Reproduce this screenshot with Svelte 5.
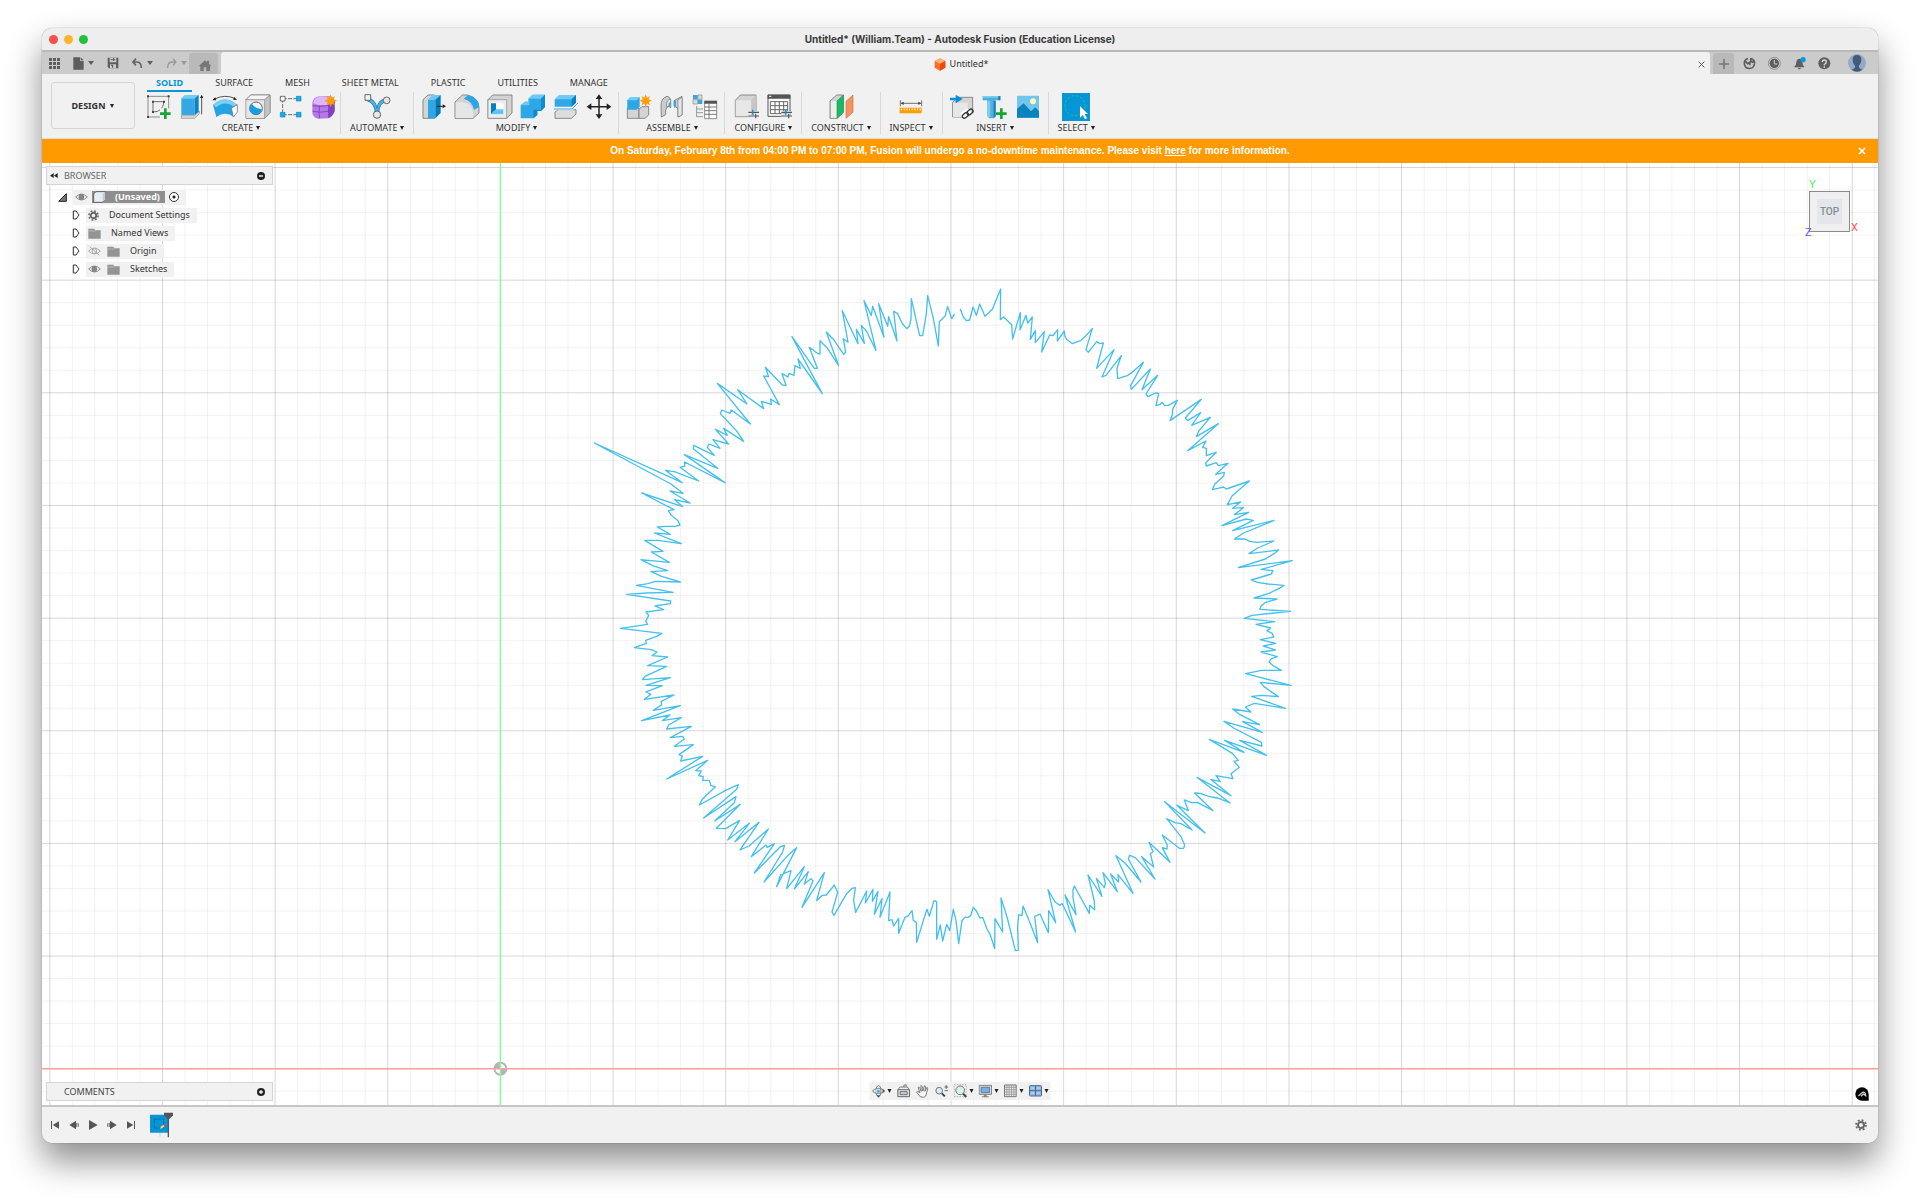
<script>
  let activeTab = 'SOLID';
  let showBanner = true;

  const tabs = ['SOLID', 'SURFACE', 'MESH', 'SHEET METAL', 'PLASTIC', 'UTILITIES', 'MANAGE'];

  const groups = [
    { label: 'CREATE', icons: ['sketch', 'extrude', 'revolve', 'hole', 'pattern', 'form'] },
    { label: 'AUTOMATE', icons: ['automate'] },
    { label: 'MODIFY', icons: ['presspull', 'fillet', 'shell', 'combine', 'split', 'move'] },
    { label: 'ASSEMBLE', icons: ['component', 'joint', 'bom'] },
    { label: 'CONFIGURE', icons: ['configure', 'configtable'] },
    { label: 'CONSTRUCT', icons: ['plane'] },
    { label: 'INSPECT', icons: ['measure'] },
    { label: 'INSERT', icons: ['derive', 'fastener', 'image'] },
    { label: 'SELECT', icons: ['select'] },
  ];

  // tool icons, drawn on an 84x84 board
  const grey = 'fill="#d4d4d4" stroke="#777" stroke-width="2.5" stroke-linejoin="round"';
  const sliders = '<path d="M46 58h32M46 69h32" stroke="#eee" stroke-width="8"/><path d="M46 58h32M46 69h32M68 62v14" stroke="#555" stroke-width="3.5"/><path d="M59 50v15" stroke="#0a96dc" stroke-width="5"/>';
  const plus = '<path d="M61 46v32M45 62h32" stroke="#16a63c" stroke-width="8"/>';
  const star = '<path d="M62 4l4 10 9-5-4 10 10 4-10 4 4 10-9-5-4 10-4-10-9 5 4-10-10-4 10-4-4-10 9 5z" fill="#ff9c08"/>';

  const icons = {
    sketch: `<path d="M9 10h62v62H9z" fill="none" stroke="#777" stroke-width="2.5"/><g fill="#444"><path d="M6 7h6v6H6zM68 7h6v6h-6zM6 69h6v6H6z"/></g><path d="M24 26h33M24 26v31M24 57q30 0 33-31" fill="none" stroke="#555" stroke-width="2.5"/><g fill="#444"><path d="M21 23h6v6h-6zM54 23h6v6h-6zM21 54h6v6h-6z"/></g><path d="M45 46h36v30H45z" fill="#f1f1f1"/>${plus}`,
    extrude: '<path d="M10 68h40l14-14v8L50 76H10z" fill="#ddd" stroke="#888" stroke-width="2"/><path d="M10 16h40v50H10z" fill="#35a7e4"/><path d="M10 16L20 6h42L50 16z" fill="#73ccf6"/><path d="M50 16L62 6v50L50 66z" fill="#0b83c5"/><path d="M71 64V12" stroke="#333" stroke-width="2.5"/><path d="M71 5l5 10H66z" fill="#222"/>',
    revolve: '<path d="M6 35Q42 4 78 35L69 72Q42 53 16 72z" fill="#25a3e2"/><path d="M6 35Q42 4 78 35L72 43Q42 20 15 43z" fill="#7bcff5"/><path d="M61 45l18-10v22L67 72z" fill="#fff" stroke="#777" stroke-width="2.5"/><path d="M9 19Q42 2 73 17" fill="none" stroke="#333" stroke-width="2.5"/><path d="M4 22l9-9 3 9zM78 20l-9-8-2 9z" fill="#222"/>',
    hole: `<path d="M6 20L20 6h58v53L62 76H6z" ${grey}/><path d="M7 21h55v54H7z" fill="#e6e6e6"/><path d="M6 20L20 6h58L62 20z" fill="#f6f6f6" stroke="#777" stroke-width="2"/><path d="M62 20L78 6v53L62 76z" fill="#c4c4c4" stroke="#888" stroke-width="2"/><circle cx="36" cy="46" r="19" fill="#eef5fa" stroke="#666" stroke-width="3"/><path d="M24 33Q37 50 53 48A18 18 0 1 1 24 33z" fill="#169de2"/>`,
    pattern: '<path d="M17 17h50M17 17v50M17 65h50" stroke="#555" stroke-width="2.5" stroke-dasharray="12 4"/><path d="M10 10h14v14H10z" fill="#fff" stroke="#555" stroke-width="2.5"/><g fill="#25a6e8" stroke="#0b8bcb" stroke-width="2"><path d="M58 10h14v14H58zM10 58h14v14H10zM58 58h14v14H58z"/></g>',
    form: `<path d="M7 32Q8 12 28 10l27-1Q72 12 74 28v28q-6 14-19 20l-30 1Q9 74 7 60z" fill="#b479e6"/><path d="M8 30Q16 12 30 10l26 1 16 14-17 11H24z" fill="#dbb7f8"/><path d="M54 36l20-11v28q-6 18-20 22z" fill="#8246bd"/><path d="M8 38q20 4 46 0l20-12M8 55q22 5 46 0l20-10M29 38q-4 18 0 38M64 30v38" fill="none" stroke="#7d3db8" stroke-width="2.5"/>${star}`,
    automate: '<path d="M16 15q22 5 26 31 4-30 29-27l-1 8Q48 28 47 62H37Q36 30 12 23z" fill="#49b6eb" stroke="#20719c" stroke-width="2.5"/><path d="M6 5h17v17H6z" fill="#f4f4f4" stroke="#666" stroke-width="3"/><circle cx="71" cy="22" r="10" fill="#e8e8e8" stroke="#666" stroke-width="3"/><circle cx="42" cy="65" r="11" fill="#e8e8e8" stroke="#666" stroke-width="3"/>',
    presspull: `<path d="M9 20L24 6h20v70H9z" ${grey}/><path d="M24 20L38 6h24L48 20z" fill="#6bc9f5"/><path d="M24 20h22v56H24z" fill="#30a7e5"/><path d="M46 20L62 6v54L46 76z" fill="#057bbb"/><path d="M50 40h22" stroke="#222" stroke-width="3"/><path d="M68 34l10 6-10 6z" fill="#222"/>`,
    fillet: `<path d="M6 27L28 6h16q34 10 34 38v16L60 76H6z" ${grey}/><path d="M8 28h18q31 4 34 29v18H8z" fill="#e6e6e6"/><path d="M32 17L46 6q32 9 32 37L63 50Q57 24 32 17z" fill="#29a7e7"/>`,
    shell: `<path d="M6 20L20 6h58v54L62 76H6z" ${grey}/><path d="M6 20h56v56H6z" fill="#ececec" stroke="#888" stroke-width="2"/><path d="M15 31h37v34H15z" fill="#fff"/><path d="M15 31h15v18L15 64z" fill="#087fc0"/><path d="M15 64l15-15h22v15z" fill="#5fc3f3"/>`,
    combine: '<path d="M5 37l13-11h10V17L41 5h37v37L66 54H55v12L43 76H5z" fill="#2ea7e6"/><path d="M5 37l13-11h10V17L41 5h37L66 17H31v20z" fill="#6bcaf5"/><path d="M66 17L78 5v37L66 54H55v12L43 76V50h23z" fill="#118bcf"/>',
    split: '<path d="M8 20L22 6h50v23L59 41H8z" fill="#31a7e5"/><path d="M8 19L22 6h50L59 19z" fill="#6dcbf6"/><path d="M59 19L72 6v23L59 41z" fill="#087fc0"/><path d="M9 57l10-7h53v13L59 76H9z" fill="#ddd" stroke="#777" stroke-width="2.5"/><path d="M6 48h54l18-18" fill="none" stroke="#f8f8f8" stroke-width="7"/><path d="M6 48h54l18-18" fill="none" stroke="#2ea5e4" stroke-width="3"/>',
    move: '<path d="M42 11v60M12 41h60" stroke="#222" stroke-width="4.5"/><g fill="#222"><path d="M42 4l10 14H32zM42 78l10-14H32zM5 41l14-10v20zM79 41L65 31v20z"/></g>',
    component: `<path d="M7 45h35v31H7z" ${grey}/><path d="M42 49l9-8h20v25L60 76H42z" ${grey}/><path d="M7 22l9-9h28v27l-9 10H7z" fill="#2ba6e6"/><path d="M7 22l9-9h28l-9 9z" fill="#73cef8"/>${star}`,
    joint: '<g fill="#ccc" stroke="#777" stroke-width="2.5"><path d="M9 40q-1-24 18-30 11 0 11 18v15q-9-8-15 8v14L10 72z"/><path d="M48 23L72 10v56l-12 6V46l-12-7z"/></g><path d="M25 43q0-24 13-25v25q-9-6-13 0M60 20l12-7v53l-12 6z" fill="#e7e7e7" stroke="#777" stroke-width="2"/><path d="M31 41q0-14 6-13v17q-2-5-6-4M48 24l6-3v19l-6 5z" fill="#37a9e2"/>',
    bom: '<path d="M6 6h14v13H6zM21 20h13v13H21z" fill="#38a7e5"/><path d="M21 6h12v13H21zM6 20h14v13H6z" fill="#ddd" stroke="#888" stroke-width="2"/><path d="M17 39v33M17 48h19M17 59h19M17 71h19" stroke="#999" stroke-width="3"/><path d="M41 25h36v52H41z" fill="#fff" stroke="#777" stroke-width="2.5"/><path d="M40 23h38v9H40z" fill="#555"/><path d="M41 42h36M41 53h36M41 64h36M54 32v44" stroke="#777" stroke-width="3"/>',
    configure: `<path d="M7 22L22 6h47v50L55 71H7z" ${grey}/><path d="M8 22h47v48H8z" fill="#e7e7e7"/><path d="M55 22L69 6v50L55 71z" fill="#c6c6c6"/>${sliders}`,
    configtable: `<path d="M6 6h66v64H6z" fill="#fff" stroke="#555" stroke-width="3"/><path d="M5 5h68v12H5z" fill="#555"/><path d="M9 10h7" stroke="#fff" stroke-width="3"/><path d="M13 26h52v36H13zM13 38h52M13 50h52M27 26v36M40 26v36M53 26v36" fill="none" stroke="#666" stroke-width="3"/>${sliders}`,
    plane: `<path d="M9 24L29 6h20v52L31 76H9z" ${grey}/><path d="M12 25h18v49H12z" fill="#eee"/><path d="M30 24L49 6v52L30 76z" fill="#16bd67" stroke="#2d925b" stroke-width="2"/><path d="M57 25L78 6v52L57 76z" fill="#f3935f" stroke="#d27345" stroke-width="2"/>`,
    measure: '<path d="M10 22v18M74 22v18M13 31h58" stroke="#555" stroke-width="2.5"/><path d="M11 31l9-5v10zM73 31l-9-5v10z" fill="#444"/><path d="M8 44h66v17H8z" fill="#ff9c08"/><path d="M12 49h60" stroke="#fff" stroke-width="5" stroke-dasharray="3 5"/>',
    derive: `<path d="M14 28L28 13h46v45L60 72H14z" ${grey}/><path d="M15 29h44v43H15z" fill="#e7e7e7"/><path d="M6 14h17V5l21 13-21 13v-9H6z" fill="#078fd9"/><g fill="none" stroke="#fff" stroke-width="10"><rect x="43" y="56" width="22" height="13" rx="6" transform="rotate(-38 54 63)"/></g><g fill="none" stroke="#333" stroke-width="4"><rect x="42" y="61" width="20" height="12" rx="6" transform="rotate(-40 52 67)"/><rect x="56" y="51" width="20" height="12" rx="6" transform="rotate(-40 66 57)"/></g>`,
    fastener: `<path d="M5 9h53v13H44v48l-6 6H25l-6-6V22H5z" fill="#4bafe2"/><path d="M5 9h53v5H5zM20 24h8v48h-8z" fill="#81cbed"/><path d="M52 9h6v13h-6zM38 24h6v46l-6 6z" fill="#207eae"/>${plus}`,
    image: '<path d="M9 8h66v66H9z" fill="#72c6ee"/><path d="M9 47l20-16 22 24 13-12 11 12v19H9z" fill="#0a82bd"/><circle cx="57" cy="25" r="9" fill="#fff5bd"/>',
    select: '<path d="M0 0h84v84H0z" fill="#0696d7"/><circle cx="39" cy="38" r="30" fill="none" stroke="#23bd91" stroke-width="3" stroke-dasharray="8 5"/><path d="M54 40v34l8-8 7 13 6-3-7-13h10z" fill="#fff"/>',
  };

  const tree = [
    { name: 'Document Settings', icon: 'gear', eye: '' },
    { name: 'Named Views', icon: 'folder', eye: '' },
    { name: 'Origin', icon: 'folder', eye: 'off' },
    { name: 'Sketches', icon: 'folder', eye: 'on' },
  ];

  // view controls, 42x42 board
  const navTools = [
    { name: 'Orbit', menu: true, art: '<ellipse cx="21" cy="21" rx="17" ry="7" fill="none" stroke="#777" stroke-width="3"/><ellipse cx="21" cy="21" rx="7" ry="16" fill="none" stroke="#777" stroke-width="3"/><path d="M33 15l8 6-8 6zM15 34l6 7 6-7z" fill="#555"/><path d="M14 15h12v12H14z" fill="#f1f1f1"/><path d="M16 17h9v9h-9z" fill="#47b2ef"/>' },
    { name: 'Look At', menu: false, art: '<path d="M4 17h35v21H4z" fill="#e4e4e4" stroke="#666" stroke-width="3"/><path d="M11 23h21v9H11z" fill="#c4d4e6" stroke="#555" stroke-width="2.5"/><path d="M5 16l6-7h22l5 7M22 9V4l7-2v5" fill="none" stroke="#777" stroke-width="3"/>' },
    { name: 'Pan', menu: false, art: '<path d="M14 38L3 24q2-5 10 2L8 10q4-4 9 12l-1-17q5-2 6 16l5-16q5 0 1 17l7-12q4 2-1 14-2 16-9 16z" fill="#f5f5f5" stroke="#666" stroke-width="2.5"/>' },
    { name: 'Zoom', menu: false, art: '<circle cx="14" cy="20" r="10" fill="#d6ecf7" stroke="#777" stroke-width="3"/><path d="M22 28l9 9" stroke="#444" stroke-width="6"/><path d="M30 9h11M35 3v12M30 20h11" stroke="#555" stroke-width="2.5"/>' },
    { name: 'Fit', menu: true, art: '<path d="M2 2h36v36H2z" fill="none" stroke="#999" stroke-width="2.5" stroke-dasharray="4 4"/><circle cx="20" cy="19" r="13" fill="#d9f0ee" stroke="#777" stroke-width="3"/><path d="M29 29l9 10" stroke="#444" stroke-width="6"/>' },
    { name: 'Display Settings', menu: true, art: '<rect x="2" y="4" width="37" height="27" fill="#d5d5d5" stroke="#777" stroke-width="2.5"/><path d="M8 10h25v16H8z" fill="#77aee5" stroke="#41658b" stroke-width="2"/><path d="M16 31h9v6h6v3H10v-3h6z" fill="#888"/>' },
    { name: 'Grid and Snaps', menu: true, art: '<path d="M3 3h35v35H3z" fill="#eee" stroke="#777" stroke-width="3"/><path d="M10 3v35M17 3v35M24 3v35M31 3v35M3 10h35M3 17h35M3 24h35M3 31h35" stroke="#888" stroke-width="2"/>' },
    { name: 'Viewports', menu: true, art: '<rect x="3" y="5" width="36" height="31" rx="2" fill="#92b8df" stroke="#496b91" stroke-width="3"/><path d="M21 5v31M3 20h36" stroke="#496b91" stroke-width="3"/><path d="M8 12h9M25 12h9M8 27h9M25 27h9" stroke="#b9d3ec" stroke-width="4"/>' },
  ];

  const playback = [
    { name: 'Go to start', d: 'M3 3h3v24H3zM27 4v22L8 15z' },
    { name: 'Step back', d: 'M1 15L21 2v26zM22 9h3v12h-3zM27 10h2v10h-2z' },
    { name: 'Play', d: 'M3 0v30l26-15z' },
    { name: 'Step forward', d: 'M29 15L9 2v26zM5 9h3v12H5zM1 10h2v10H1z' },
    { name: 'Go to end', d: 'M24 3h3v24h-3zM3 4v22l19-11z' },
  ];

  const gridStep = 22.53;
  const originX = 458.4;
  const originY = 905.7;
  const columns = Array.from({ length: 140 }, (_, i) => i - 20);
  const rows = Array.from({ length: 90 }, (_, i) => i - 10);

  // sketch profile, one run per quadrant
  const profile = [
    { x: 0, y: 0, points: '1093,103 1085,116 1073,79 1066,107 1048,125 1045,198 1030,115 1013,47 1009,102 998,167 989,167 964,56 963,117 958,139 950,146 938,132 922,100 911,94 921,183 896,110 893,139 866,71 882,172 848,79 844,106 822,62 858,211 829,153 814,136 823,190 799,148 804,191 757,92 774,187 760,176 767,217 761,223 731,179 709,156 746,257 711,203 690,182 690,222 682,220 658,202 682,265 673,265 606,170 697,341 624,237 631,265 615,257 612,286 597,280 594,291 576,281 588,316 577,315 526,262 536,290 521,288 568,374 542,357 544,373 514,364 521,386 443,329 471,372 382,310 481,432 424,390 420,400 396,390 391,401 440,453 461,484 401,445 412,466 376,448 416,492 369,479 390,505 357,492 352,502 373,526 311,496 310,506 383,565 283,524 405,608 284,546 284,558 270,562 326,603 253,575 226,571 277,608 13,489 243,612 279,640 240,633 300,669 254,659 278,680 155,639 252,689 235,692 244,706 264,722 270,735 255,739 226,739 202,741 241,763 193,759 274,791 204,781 164,781 219,814 184,816 238,847 153,839 188,857 233,872 183,875 215,889 271,906 196,904 174,911 139,916 249,937 169,939 110,943 242,963 241,971 195,978 221,989 168,996 176,1006 167,1024 173,1033 92,1045' },
    { x: 0, y: 960, points: '92,85 215,100 200,109 167,121 169,130 133,143 184,149 201,156 186,167 233,171 173,197 230,199 165,229 158,239 241,233 168,256 217,257 168,276 183,283 163,298 252,285 214,304 214,315 190,331 271,317 155,362 240,345 217,362 274,353 236,375 230,387 304,379 241,413 278,409 283,417 253,439 310,434 267,464 277,468 272,483 338,469 230,537 353,481 317,512 334,513 326,527 340,530 338,541 358,541 363,557 376,560 337,598 328,615 407,571 445,554 440,568 341,654 438,590 433,608 374,663 451,613 379,685 407,686 449,661 413,720 478,670 435,725 507,667 450,750 477,738 535,687 484,770 528,735 532,742 553,731 493,819 571,740 584,736 577,758 522,846 594,766 620,743 560,860 572,824 603,812 590,866 643,800 613,867 655,815 643,852 663,836 669,843 636,922 703,818 680,902 697,886 709,885 733,855 743,877 726,936 732,946 770,881 786,865 796,863 791,901 797,937 830,873 826,909 849,868 847,904 864,874 853,943 876,896 870,952 900,876 896,962 906,959 911,978 926,955 926,1000 945,952 955,947 966,932 970,961 979,967 980,1027 998,968 1011,928 1018,949 1032,902 1040,905 1040,1018 1051,975 1058,1023 1070,973 1079,992 1090,928 1098,961 1106,1031 1116,962' },
    { x: 1050, y: 960, points: '66,962 75,952 84,952 92,947 100,922 109,933 120,954 128,952 141,987 151,1005 164,1046 165,956 188,996 183,894 202,954 226,1052 235,1051 233,980 236,944 246,947 249,918 269,966 293,1028 284,949 300,942 325,998 326,932 347,968 324,869 345,906 359,916 367,911 407,996 375,885 408,944 399,892 399,870 403,858 448,940 449,916 464,929 463,903 444,825 486,889 469,835 493,863 496,850 489,818 532,875 512,822 536,846 534,824 579,880 528,767 555,789 603,846 565,777 569,766 586,773 645,837 605,770 641,801 631,761 639,755 627,727 690,787 667,743 681,747 682,736 667,705 718,745 731,745 734,735 723,710 680,656 705,668 723,671 756,690 674,605 795,699 711,616 745,632 733,600 755,608 772,607 819,632 764,579 781,580 806,589 832,594 870,609 771,532 873,587 812,538 841,545 828,527 879,536 873,521 898,502 882,484 895,481 877,460 808,418 912,457 854,421 980,466 899,421 966,438 964,427 881,384 852,364 967,397 908,365 959,374 900,344 878,327 933,336 916,321 943,310 1036,325 935,289 965,286 1015,290 972,260 961,247 1053,256 917,221 965,211 1024,211 998,196 987,186 993,177 1012,170 963,156 1006,150 970,138 1007,130 961,119 1001,111 997,101 981,92 992,84 948,73 1004,65 913,55 936,46 1052,34 960,28' },
    { x: 1050, y: 0, points: '960,988 963,978 975,968 1011,957 942,954 987,940 1018,925 1032,916 984,912 952,907 934,900 994,882 999,872 964,868 1057,842 895,863 976,837 1002,821 1016,810 927,821 953,804 1002,783 950,787 929,784 916,777 883,777 911,759 1002,721 878,752 940,721 919,717 846,737 926,697 883,704 910,683 878,685 902,666 862,674 876,648 928,603 859,627 851,621 817,629 824,613 851,588 853,577 827,583 864,550 835,557 829,548 799,558 797,549 829,517 799,527 799,505 788,502 798,483 743,512 835,431 769,470 777,452 811,412 755,436 782,398 743,422 736,414 784,358 690,422 697,405 698,388 712,361 685,376 674,377 667,367 661,373 648,377 656,340 646,339 624,350 618,342 653,286 606,329 631,267 574,328 572,317 610,247 577,277 562,287 533,296 531,265 544,227 498,286 486,291 522,209 470,265 490,189 479,191 470,185 445,217 438,209 457,145 436,169 423,181 397,191 380,178 375,170 373,153 352,183 353,149 339,167 329,165 305,216 313,155 286,188 286,152 271,178 277,111 263,129 258,106 240,150 241,97 218,177 215,134 191,111 181,119 182,27 157,88 135,109 119,72 109,106 99,81 89,120 79,122 70,111 61,88' },
  ];

  function closeBanner() {
    showBanner = false;
  }
</script>

{#snippet gear(size)}
  <svg width={size} height={size} viewBox="0 0 36 36">
    <circle cx="18" cy="18" r="9" fill="none" stroke="#666" stroke-width="6" />
    <circle cx="18" cy="18" r="15" fill="none" stroke="#666" stroke-width="5" stroke-dasharray="5.8 5.98" />
  </svg>
{/snippet}

{#snippet eye(off)}
  <svg width="13" height="10" viewBox="0 0 39 30">
    <path d="M2 15Q19-3 37 15 19 33 2 15z" fill={off ? 'none' : '#eee'} stroke={off ? '#aaa' : '#8a8a8a'} stroke-width="3" />
    <circle cx="19" cy="15" r="7" fill={off ? 'none' : '#8a8a8a'} stroke={off ? '#aaa' : '#777'} stroke-width="3" />
    {#if off}<path d="M5 2l29 26" stroke="#aaa" stroke-width="3" />{/if}
  </svg>
{/snippet}

<div class="window">
  <header class="titlebar">
    <div class="lights">
      <button class="light red" aria-label="Close window"></button>
      <button class="light yellow" aria-label="Minimize window"></button>
      <button class="light green" aria-label="Zoom window"></button>
    </div>
    <h1>Untitled* (William.Team) - Autodesk Fusion (Education License)</h1>
  </header>

  <div class="tabbar">
    <div class="quick">
      <button aria-label="Data panel">
        <svg width="11" height="11" viewBox="0 0 33 33" fill="#5e5e5e"><path d="M0 0h9v9H0zM12 0h9v9h-9zM24 0h9v9h-9zM0 12h9v9H0zM12 12h9v9h-9zM24 12h9v9h-9zM0 24h9v9H0zM12 24h9v9h-9zM24 24h9v9h-9z" /></svg>
      </button>
      <button aria-label="File">
        <svg width="11" height="13" viewBox="0 0 33 39" fill="#5e5e5e"><path d="M1 1h20v11h11v26H1zM23 1l9 9h-9z" /></svg>
        <i class="caret"></i>
      </button>
      <button aria-label="Save">
        <svg width="12" height="12" viewBox="0 0 36 36"><path d="M2 2h32v32H6l-4-4z" fill="#5e5e5e" /><path d="M8 3h20v13H8zM9 22h18v12H9z" fill="#cbcbcb" /><path d="M11 8h14M20 3v9M13 24h4v8" stroke="#5e5e5e" stroke-width="3" /></svg>
      </button>
      <button aria-label="Undo">
        <svg width="11" height="11" viewBox="0 0 33 33"><path d="M12 2L3 12l9 10M4 12h12q12 1 12 18" fill="none" stroke="#666" stroke-width="5" /></svg>
        <i class="caret"></i>
      </button>
      <button aria-label="Redo">
        <svg width="11" height="11" viewBox="0 0 33 33"><path d="M21 2l9 10-9 10M29 12H17Q5 13 5 30" fill="none" stroke="#999" stroke-width="4" /></svg>
        <i class="caret pale"></i>
      </button>
    </div>
    <button class="home" aria-label="Home">
      <svg width="12" height="11" viewBox="0 0 36 33" fill="#777"><path d="M0 17L18 1l6 5V2h6v9l6 6-3 3v13H22V22h-8v11H4V20z" /></svg>
    </button>
    <div class="doc">
      <div class="docname">
        <svg width="12" height="13" viewBox="0 0 36 39"><path d="M18 1l16 8v20L18 38 2 29V9z" fill="#f9702a" /><path d="M18 1l16 8-16 8L2 9z" fill="#ffb37a" /><path d="M18 17l16-8v20l-16 9z" fill="#ea4b0b" /></svg>
        Untitled*
      </div>
      <button class="close" aria-label="Close document">
        <svg width="7" height="7" viewBox="0 0 21 21"><path d="M2 2l17 17M19 2L2 19" stroke="#555" stroke-width="3" /></svg>
      </button>
    </div>
    <button class="add" aria-label="New document">
      <svg width="10" height="10" viewBox="0 0 30 30"><path d="M15 0v30M0 15h30" stroke="#777" stroke-width="5" /></svg>
    </button>
    <div class="account">
      <button aria-label="Extensions">
        <svg width="13" height="13" viewBox="0 0 39 39"><path d="M15 5A15 15 0 1 0 34 21M21 5q14 1 14 15M7 13l7 7 7-5-1 10M23 6l1 8 9 2" fill="none" stroke="#5e5e5e" stroke-width="5" /></svg>
      </button>
      <button aria-label="Job status">
        <svg width="13" height="13" viewBox="0 0 39 39"><circle cx="19" cy="19" r="18" fill="none" stroke="#777" stroke-width="2" /><circle cx="19" cy="19" r="14" fill="#5e5e5e" /><path d="M19 9v12h9" fill="none" stroke="#ccc" stroke-width="3" /></svg>
      </button>
      <button aria-label="Notifications">
        <svg width="13" height="13" viewBox="0 0 39 39"><path d="M4 29q6-4 6-14 1-9 9-10 9 1 9 10 0 10 6 14v2H4zM14 33h10q-5 8-10 0" fill="#5e5e5e" /><circle cx="30" cy="8" r="8" fill="#0696e7" /></svg>
      </button>
      <button aria-label="Help">
        <svg width="13" height="13" viewBox="0 0 39 39"><circle cx="19" cy="19" r="18" fill="#5e5e5e" /><path d="M13 15q0-6 6-6t6 6q0 4-6 7v3M19 28v4" fill="none" stroke="#ddd" stroke-width="4" /></svg>
      </button>
      <button class="avatar" aria-label="Profile">
        <svg width="18" height="18" viewBox="0 0 54 54"><circle cx="27" cy="27" r="27" fill="#91abc8" /><path d="M27 3q14 0 13 16-1 11-7 16v6l10 7q-15 11-32 0l10-7v-6q-7-5-7-16Q13 3 27 3z" fill="#455a76" /></svg>
      </button>
    </div>
  </div>

  <div class="ribbon">
    <button class="workspace">DESIGN <i class="caret dark"></i></button>
    <div class="tools">
      <nav>
        {#each tabs as tab}
          <button class="tab" class:active={activeTab === tab} on:click={() => (activeTab = tab)}>{tab}</button>
        {/each}
      </nav>
      <div class="groups">
        {#each groups as group}
          <div class="group">
            <div class="icons">
              {#each group.icons as name}
                <button class="tool" aria-label={name}>
                  <svg width="28" height="28" viewBox="0 0 84 84">{@html icons[name]}</svg>
                </button>
              {/each}
            </div>
            <button class="grouplabel">{group.label} <i class="caret dark"></i></button>
          </div>
        {/each}
      </div>
    </div>
  </div>

  {#if showBanner}
    <div class="banner">
      <p>On Saturday, February 8th from 04:00 PM to 07:00 PM, Fusion will undergo a no-downtime maintenance. Please visit <a href="#status">here</a> for more information.</p>
      <button aria-label="Dismiss" on:click={closeBanner}>
        <svg width="8" height="8" viewBox="0 0 24 24"><path d="M3 3l18 18M21 3L3 21" stroke="#fff" stroke-width="5" /></svg>
      </button>
    </div>
  {/if}

  <main class="canvas">
    <svg class="drawing" width="100%" height="100%">
      <g stroke="#000">
        {#each columns as i}
          {#if i !== 0}
            <line x1={originX + i * gridStep} x2={originX + i * gridStep} y1="0" y2="100%" stroke-opacity={i % 5 ? 0.05 : 0.16} />
          {/if}
        {/each}
        {#each rows as i}
          {#if i !== 0}
            <line x1="0" x2="100%" y1={originY - i * gridStep} y2={originY - i * gridStep} stroke-opacity={i % 5 ? 0.05 : 0.16} />
          {/if}
        {/each}
      </g>
      <circle cx={originX} cy={originY} r="6" fill="#fff" stroke="#b5b5b5" stroke-width="2" />
      <path d="M458 906v-6a6 6 0 0 0-6 6zM458 906v6a6 6 0 0 0 6-6z" fill="#b5b5b5" />
      <line x1="0" x2="100%" y1={originY} y2={originY} stroke="#ff9c9c" stroke-width="1.4" />
      <line x1={originX} x2={originX} y1="0" y2="100%" stroke="#8df59a" stroke-width="1.4" />
      <g transform="translate(548 117) scale(0.33333)" fill="none" stroke="#45c0ed" stroke-width="4" stroke-linejoin="round" stroke-linecap="round">
        {#each profile as run}
          <polyline points={run.points} transform="translate({run.x} {run.y})" />
        {/each}
      </g>
    </svg>

    <section class="browser">
      <div class="panelhead">
        <svg width="8" height="5" viewBox="0 0 24 15"><path d="M11 0v15L0 8zM23 0v15L12 8z" fill="#222" /></svg>
        <h2>BROWSER</h2>
        <button aria-label="Collapse browser">
          <svg width="8" height="8" viewBox="0 0 24 24"><circle cx="12" cy="12" r="12" fill="#222" /><path d="M6 12h12" stroke="#f1f1f1" stroke-width="4" /></svg>
        </button>
      </div>
      <ul>
        <li class="root">
          <svg width="9" height="9" viewBox="0 0 27 27"><path d="M25 2v23H2z" fill="#777" stroke="#222" stroke-width="3" /></svg>
          <div class="rootchip">
            {@render eye(false)}
            <span class="unsaved">
              <svg width="13" height="12" viewBox="0 0 39 36"><path d="M2 9l7-7h28v23l-8 9H2z" fill="#e9eef5" stroke="#555" stroke-width="2.5" /><path d="M29 9l8-7v23l-8 9z" fill="#c3ccd8" /></svg>
              (Unsaved)
            </span>
            <input type="radio" checked aria-label="Active component" />
          </div>
        </li>
        {#each tree as node}
          <li>
            <svg width="8" height="10" viewBox="0 0 24 30"><path d="M4 3l8 0 9 12-9 12H4z" fill="#fff" stroke="#333" stroke-width="3" /></svg>
            <div class="chip">
              {#if node.eye}
                {@render eye(node.eye === 'off')}
              {/if}
              {#if node.icon === 'gear'}
                {@render gear(11)}
              {:else}
                <svg width="13" height="11" viewBox="0 0 39 33"><path d="M1 2h18l3 5h16v25H1z" fill="#949494" /><path d="M1 9h22" stroke="#ccc" stroke-width="2" /></svg>
              {/if}
              <span>{node.name}</span>
            </div>
          </li>
        {/each}
      </ul>
    </section>

    <div class="viewcube">
      <span class="axis y">Y</span>
      <button class="face"><span>TOP</span></button>
      <span class="axis z">Z</span>
      <span class="axis x">X</span>
    </div>

    <section class="comments">
      <div class="panelhead">
        <h2>COMMENTS</h2>
        <button aria-label="Add comment">
          <svg width="8" height="8" viewBox="0 0 24 24"><circle cx="12" cy="12" r="12" fill="#222" /><path d="M6 12h12M12 6v12" stroke="#f1f1f1" stroke-width="4" /></svg>
        </button>
      </div>
    </section>

    <div class="navbar">
      {#each navTools as tool}
        <button aria-label={tool.name}>
          <svg width="14" height="14" viewBox="0 0 42 42">{@html tool.art}</svg>
          {#if tool.menu}<i class="caret dark"></i>{/if}
        </button>
      {/each}
    </div>

    <button class="assistant" aria-label="Assistant">
      <svg width="14" height="14" viewBox="0 0 42 42"><path d="M21 1a20 20 0 1 0 0 40h20V21A20 20 0 0 0 21 1z" fill="#000" /><path d="M10 27l13-11q9-2 9 10l-7-5-7 7" fill="none" stroke="#ccc" stroke-width="4" /></svg>
    </button>
  </main>

  <footer class="timeline">
    <div class="playback">
      {#each playback as item}
        <button aria-label={item.name}>
          <svg width="10" height="10" viewBox="0 0 30 30"><path d={item.d} fill="#555" /></svg>
        </button>
      {/each}
    </div>
    <button class="feature" aria-label="Sketch feature">
      <svg width="24" height="26" viewBox="0 0 72 78">
        <path d="M30 60v14" stroke="#bbb" stroke-width="2" />
        <path d="M0 8h56v54H0z" fill="#0696d7" />
        <path d="M13 21h28v27H13z" fill="none" stroke="#17699d" stroke-width="3" stroke-dasharray="20 4" />
        <path d="M30 50l3-7 7-4 4 4-7 6z" fill="#f8cf4c" />
        <path d="M41 38l4-3 3 4-3 4z" fill="#e34b4b" />
        <path d="M42 2h27v8L59 20h-7L42 10z" fill="#555" />
        <path d="M55 16v60" stroke="#555" stroke-width="4" />
      </svg>
    </button>
    <button class="settings" aria-label="Timeline settings">{@render gear(12)}</button>
  </footer>
</div>

<style>
  :global(body) {
    margin: 0;
    background: #fff;
  }

  :global(#app) {
    display: flow-root;
    height: 100vh;
    overflow: hidden;
  }

  .window {
    box-sizing: border-box;
    display: flex;
    flex-direction: column;
    height: calc(100vh - 84px);
    min-height: 480px;
    margin: 28px 42px 0;
    border-radius: 10px;
    overflow: hidden;
    background: #f1f1f1;
    box-shadow: 0 0 1px rgba(0, 0, 0, 0.6), 0 18px 34px rgba(0, 0, 0, 0.45);
    font-family: 'Noto Sans', 'Open Sans', sans-serif;
    font-size: 9px;
    line-height: 12px;
    color: #333;
  }

  button {
    margin: 0;
    padding: 0;
    border: 0;
    background: none;
    font: inherit;
    color: inherit;
    display: flex;
    align-items: center;
    justify-content: center;
  }

  svg {
    display: block;
    flex: none;
  }

  h1,
  h2,
  p,
  ul {
    margin: 0;
    padding: 0;
    font-size: inherit;
    list-style: none;
  }

  .caret {
    width: 0;
    height: 0;
    border: solid transparent;
    border-width: 4px 3px 0;
    border-top-color: #5e5e5e;
  }

  .caret.dark {
    border-width: 4px 2px 0;
    border-top-color: #222;
  }

  .caret.pale {
    border-top-color: #999;
  }

  /* title bar */
  .titlebar {
    display: grid;
    grid-template-columns: 60px 1fr 60px;
    align-items: center;
    height: 22px;
    flex: none;
    background: #eee;
    border-bottom: 2px solid #b9b9b9;
  }

  .titlebar h1 {
    font: bold 10px/14px Inter, 'Liberation Sans', sans-serif;
    text-align: center;
    white-space: nowrap;
    color: #3a3a3a;
  }

  .lights {
    display: flex;
    gap: 6px;
    padding-left: 7px;
  }

  .light {
    width: 9px;
    height: 9px;
    border-radius: 50%;
  }

  .red { background: #fb4f4a; }
  .yellow { background: #fdb32a; }
  .green { background: #22c13a; }

  /* document tabs */
  .tabbar {
    display: flex;
    align-items: stretch;
    height: 22px;
    flex: none;
    background: #cbcbcb;
  }

  .quick {
    display: flex;
    align-items: center;
    width: 147px;
    gap: 13px;
    box-sizing: border-box;
    padding-left: 7px;
  }

  .quick button {
    gap: 4px;
  }

  .home {
    width: 29px;
    margin-top: 1px;
    padding: 3px 0 0 2px;
    border-radius: 3px 3px 0 0;
    background: #b9b9b9;
  }

  .doc {
    flex: 1;
    display: flex;
    align-items: center;
    margin-left: 3px;
    padding: 2px 5px 0 4px;
    background: #f1f1f1;
    border-radius: 3px 3px 0 0;
  }

  .docname {
    flex: 1;
    display: flex;
    align-items: center;
    justify-content: center;
    gap: 4px;
  }

  .close {
    width: 8px;
  }

  .add {
    width: 21px;
    margin: 1px 0 0 3px;
    background: #b9b9b9;
    border-radius: 3px 3px 0 0;
  }

  .account {
    display: flex;
    align-items: center;
    gap: 12px;
    padding: 0 12px 0 9px;
  }

  .avatar {
    margin-left: 5px;
  }

  /* ribbon */
  .ribbon {
    display: flex;
    height: 61px;
    flex: none;
    border-bottom: 1px solid #ddd;
    padding-bottom: 3px;
    background: #f1f1f1;
  }

  .workspace {
    box-sizing: border-box;
    width: 84px;
    height: 47px;
    margin: 8px 7px 0 9px;
    gap: 5px;
    border: 1px solid #d5d5d5;
    border-radius: 3px;
    font-weight: bold;
  }

  .tools {
    flex: 1;
    min-width: 0;
  }

  nav {
    display: flex;
    gap: 14px;
    padding-left: 5px;
  }

  .tab {
    height: 18px;
    padding: 2px 9px 0;
    border-bottom: 2px solid transparent;
    white-space: nowrap;
  }

  .tab.active {
    color: #0696d7;
    font-weight: bold;
    border-bottom-color: #0696d7;
  }

  .groups {
    display: flex;
  }

  .group {
    display: flex;
    flex-direction: column;
    align-items: center;
    height: 42px;
    padding: 0 3px;
    border-right: 1px solid #d9d9d9;
  }

  .group:first-child {
    padding: 0;
  }

  .group:last-child {
    border-right: 0;
  }

  .icons {
    display: flex;
    height: 31px;
  }

  .tool {
    width: 33px;
    height: 30px;
  }

  .grouplabel {
    gap: 3px;
    padding: 0 6px;
    white-space: nowrap;
  }

  /* maintenance notice */
  .banner {
    display: flex;
    align-items: center;
    height: 24px;
    flex: none;
    background: #ff9b00;
    color: #fff;
    font: bold 10px/14px 'Liberation Sans', sans-serif;
  }

  .banner p {
    flex: 1;
    text-align: center;
  }

  .banner a {
    color: #fff;
  }

  .banner button {
    width: 8px;
    margin-right: 12px;
  }

  /* modelling space */
  .canvas {
    position: relative;
    flex: 1;
    min-height: 0;
    overflow: hidden;
    background: #fff;
  }

  .drawing {
    position: absolute;
    inset: 0;
  }

  .browser {
    position: absolute;
    top: 3px;
    left: 4px;
    width: 227px;
  }

  .comments {
    position: absolute;
    left: 4px;
    bottom: 4px;
    width: 227px;
  }

  .panelhead {
    box-sizing: border-box;
    display: flex;
    align-items: center;
    height: 19px;
    padding: 0 7px 0 3px;
    border: 1px solid #d4d4d4;
    background: #f1f1f1;
  }

  .panelhead h2 {
    flex: 1;
    margin-left: 6px;
    font-weight: normal;
    color: #666;
  }

  .comments h2 {
    margin-left: 14px;
    color: #444;
  }

  .browser ul {
    margin-top: 3px;
  }

  .browser li {
    display: flex;
    align-items: center;
    gap: 6px;
    height: 18px;
    padding-left: 26px;
  }

  .browser .root {
    padding-left: 12px;
  }

  .chip,
  .rootchip {
    display: flex;
    align-items: center;
    gap: 6px;
    height: 15px;
    padding: 0 7px 0 2px;
    background: #f1f1f1;
  }

  .chip span {
    margin-left: 4px;
  }

  .rootchip {
    gap: 4px;
  }

  .unsaved {
    display: flex;
    align-items: center;
    gap: 9px;
    height: 12px;
    padding: 0 5px 0 1px;
    background: #8e8e8e;
    color: #fff;
    font-weight: bold;
  }

  .rootchip input {
    appearance: none;
    width: 10px;
    height: 10px;
    margin: 0;
    border: 1px solid #333;
    border-radius: 50%;
    background: radial-gradient(#222 0 1px, #fff 2px);
  }

  .viewcube {
    position: absolute;
    top: 16px;
    right: 21px;
    width: 50px;
    height: 60px;
    font-family: Roboto, sans-serif;
  }

  .face {
    position: absolute;
    top: 12px;
    left: 2px;
    width: 41px;
    height: 41px;
    border: 1px solid #8b8b8b;
    background: #f0f0f1;
  }

  .face span {
    display: flex;
    align-items: center;
    justify-content: center;
    width: 25px;
    height: 25px;
    background: #e4e6eb;
    color: #858c95;
    font-size: 10px;
    font-weight: 500;
  }

  .axis {
    position: absolute;
    font-size: 11px;
  }

  .axis.y { top: 0; left: 2px; color: #4cf064; }
  .axis.z { bottom: 0; left: -2px; color: #5a5aff; }
  .axis.x { bottom: 5px; right: -1px; color: #ff5a5a; }

  .navbar {
    position: absolute;
    bottom: 5px;
    left: 50%;
    transform: translateX(-50%);
    display: flex;
    align-items: center;
    gap: 5px;
    height: 18px;
    padding: 0 2px;
    background: #f1f1f1;
  }

  .navbar button {
    gap: 2px;
  }

  .assistant {
    position: absolute;
    right: 9px;
    bottom: 4px;
  }

  /* timeline */
  .timeline {
    display: flex;
    align-items: center;
    height: 36px;
    flex: none;
    padding: 0 11px 0 8px;
    border-top: 2px solid #c6c6c6;
    background: #f1f1f1;
  }

  .playback {
    display: flex;
    gap: 9px;
  }

  .feature {
    margin-left: 14px;
  }

  .settings {
    margin-left: auto;
  }
</style>
